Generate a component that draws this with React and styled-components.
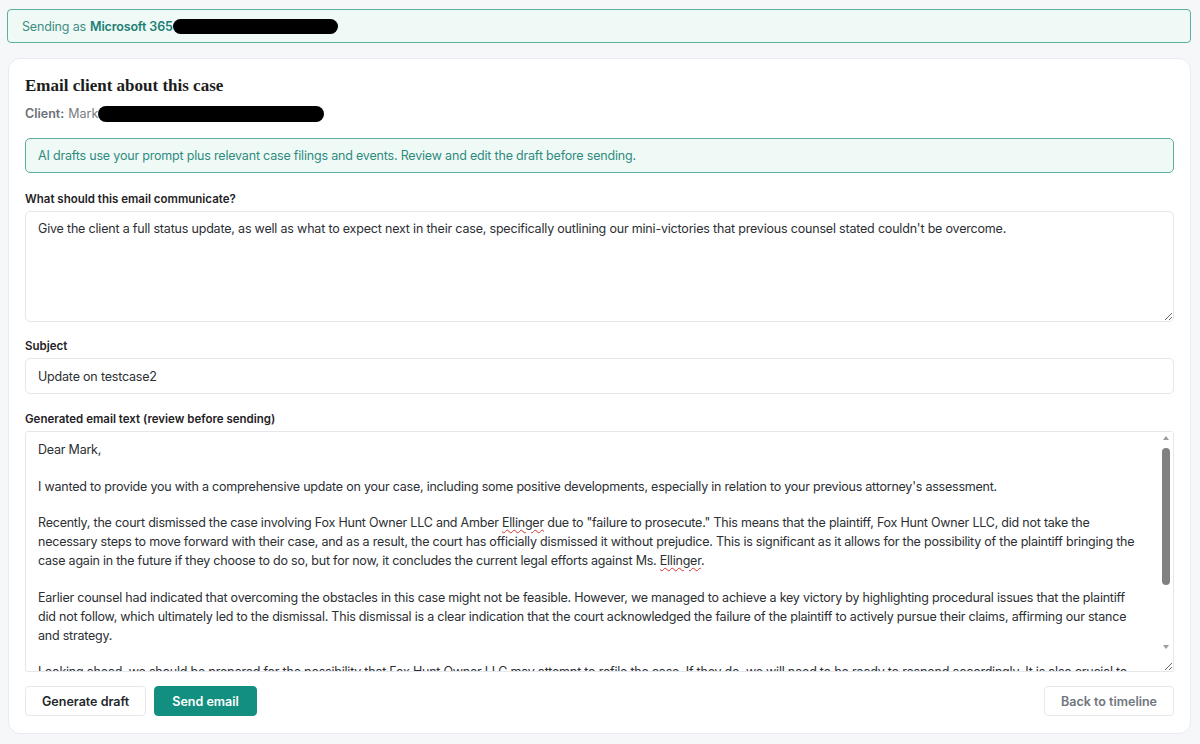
import styled, { createGlobalStyle } from "styled-components";

const GlobalStyle = createGlobalStyle`
  body {
    margin: 0;
    background: #f6f7f9;
    font-family: "Inter", "Noto Sans", sans-serif;
    color: #2b2f33;
  }
`;

const Page = styled.div`
  padding: 9px 9px 9px 7px;
  display: flex;
  flex-direction: column;
  gap: 15px;
`;

const Banner = styled.div`
  height: 34px;
  box-sizing: border-box;
  display: flex;
  align-items: center;
  padding: 0 14px;
  background: #effaf7;
  border: 1px solid #5aaea2;
  border-radius: 4px;
  font-size: 12.5px;
  letter-spacing: -0.15px;
  color: #3f8c82;

  b {
    font-weight: 600;
    color: #1d7f73;
    margin-left: 4px;
  }
`;

const Redacted = styled.span`
  display: inline-block;
  width: ${(p) => p.w}px;
  height: ${(p) => p.h || 16}px;
  background: #000;
  border-radius: 9px;
`;

const Card = styled.section`
  margin-left: 1px;
  background: #fff;
  border: 1px solid #e8ebef;
  border-radius: 12px;
  padding: 16px 16px 17px;
`;

const Title = styled.h2`
  margin: 0;
  font-family: "Liberation Serif", "DejaVu Serif", serif;
  font-weight: 700;
  font-size: 17px;
  line-height: 22px;
  color: #1b1d20;
`;

const ClientLine = styled.div`
  margin-top: 9px;
  display: flex;
  align-items: center;
  font-size: 12.5px;
  line-height: 16px;
  color: #777c82;

  b {
    font-weight: 600;
    color: #6b7076;
    margin-right: 4px;
  }
`;

const Notice = styled.div`
  margin-top: 16px;
  height: 35px;
  box-sizing: border-box;
  display: flex;
  align-items: center;
  padding: 0 12px;
  background: #effaf7;
  border: 1px solid #5aaea2;
  border-radius: 5px;
  font-size: 12.5px;
  letter-spacing: -0.19px;
  color: #2f8a7e;
`;

const Field = styled.div`
  margin-top: ${(p) => p.gap || 16}px;
`;

const Label = styled.label`
  display: block;
  font-size: 11.5px;
  font-weight: 600;
  line-height: 16px;
  color: #1f2226;
  margin-bottom: 4px;
`;

const Prompt = styled.textarea`
  display: block;
  width: 100%;
  box-sizing: border-box;
  height: 111px;
  padding: 8px 12px;
  border: 1px solid #e4e7eb;
  border-radius: 5px;
  font-family: inherit;
  font-size: 12.5px;
  letter-spacing: -0.19px;
  line-height: 18px;
  color: #2b2f33;
  resize: vertical;
  outline: none;
`;

const TextInput = styled.input`
  display: block;
  width: 100%;
  box-sizing: border-box;
  height: 36px;
  padding: 0 12px;
  border: 1px solid #e4e7eb;
  border-radius: 5px;
  font-family: inherit;
  font-size: 12.5px;
  letter-spacing: -0.19px;
  color: #2b2f33;
  outline: none;
`;

const DraftBox = styled.div`
  position: relative;
`;

const Draft = styled.div`
  height: 241px;
  box-sizing: border-box;
  padding: 8px 27px 8px 12px;
  border: 1px solid #e4e7eb;
  border-radius: 3px;
  overflow: hidden;
  resize: vertical;
  font-size: 12.5px;
  letter-spacing: -0.22px;
  line-height: 19px;
  color: #2b2f33;
`;

const Para = styled.p`
  margin: 0 0 17.5px;
  white-space: pre;
`;

const Misspelt = styled.span`
  text-decoration: underline wavy #d2352c;
  text-decoration-thickness: 1px;
  text-underline-offset: 2px;
`;

/* scrollbar drawn over the right edge of the draft */
const ScrollBar = styled.div`
  position: absolute;
  top: 1px;
  right: 1px;
  bottom: 19px;
  width: 14px;
  background: #fff;
  display: flex;
  flex-direction: column;
  align-items: center;
`;

const Arrow = styled.span`
  flex: none;
  margin: ${(p) => (p.down ? "auto 0 4px" : "4px 0 0")};
  width: 0;
  height: 0;
  border-left: 3.5px solid transparent;
  border-right: 3.5px solid transparent;
  ${(p) =>
    p.down
      ? "border-top: 4px solid #9c9c9c;"
      : "border-bottom: 4px solid #9c9c9c;"}
`;

const Thumb = styled.span`
  flex: none;
  margin-top: 8px;
  width: 8px;
  height: 137px;
  border-radius: 4px;
  background: #818181;
`;

const Actions = styled.div`
  margin-top: 14px;
  display: flex;
  gap: 8px;
`;

const Button = styled.button`
  height: 30px;
  padding: 0 ${(p) => p.px || 16}px;
  border-radius: 4px;
  font-family: inherit;
  font-size: 12.5px;
  font-weight: 600;
  cursor: pointer;
  border: 1px solid ${(p) => (p.primary ? "#138f80" : "#e6e8eb")};
  background: ${(p) => (p.primary ? "#138f80" : "#fff")};
  color: ${(p) => (p.primary ? "#fff" : p.muted ? "#6f767e" : "#23272b")};
  margin-left: ${(p) => (p.end ? "auto" : "0")};
`;

export default function App() {
  return (
    <>
      <GlobalStyle />
      <Page>
        <Banner>
          Sending as <b>Microsoft 365</b>
          <Redacted w={165} h={15} />
        </Banner>

        <Card>
          <Title>Email client about this case</Title>
          <ClientLine>
            <b>Client:</b>Mark
            <Redacted w={226} />
          </ClientLine>

          <Notice>
            AI drafts use your prompt plus relevant case filings and events. Review and edit the draft before sending.
          </Notice>

          <Field gap={18}>
            <Label>What should this email communicate?</Label>
            <Prompt
              spellCheck={false}
              defaultValue="Give the client a full status update, as well as what to expect next in their case, specifically outlining our mini-victories that previous counsel stated couldn't be overcome."
            />
          </Field>

          <Field gap={16}>
            <Label>Subject</Label>
            <TextInput defaultValue="Update on testcase2" />
          </Field>

          <Field gap={17}>
            <Label>Generated email text (review before sending)</Label>
            <DraftBox>
              <Draft>
                <Para>Dear Mark,</Para>
                <Para>
                  I wanted to provide you with a comprehensive update on your case, including some positive developments, especially in relation to your previous attorney's assessment.
                </Para>
                <Para>
                  Recently, the court dismissed the case involving Fox Hunt Owner LLC and Amber <Misspelt>Ellinger</Misspelt> due to "failure to prosecute." This means that the plaintiff, Fox Hunt Owner LLC, did not take the{"\n"}necessary steps to move forward with their case, and as a result, the court has officially dismissed it without prejudice. This is significant as it allows for the possibility of the plaintiff bringing the{"\n"}case again in the future if they choose to do so, but for now, it concludes the current legal efforts against Ms. <Misspelt>Ellinger</Misspelt>.
                </Para>
                <Para>
                  Earlier counsel had indicated that overcoming the obstacles in this case might not be feasible. However, we managed to achieve a key victory by highlighting procedural issues that the plaintiff{"\n"}did not follow, which ultimately led to the dismissal. This dismissal is a clear indication that the court acknowledged the failure of the plaintiff to actively pursue their claims, affirming our stance{"\n"}and strategy.
                </Para>
                <Para>
                  Looking ahead, we should be prepared for the possibility that Fox Hunt Owner LLC may attempt to refile the case. If they do, we will need to be ready to respond accordingly. It is also crucial to
                </Para>
              </Draft>
              <ScrollBar>
                <Arrow />
                <Thumb />
                <Arrow down />
              </ScrollBar>
            </DraftBox>
          </Field>

          <Actions>
            <Button>Generate draft</Button>
            <Button primary px={17}>Send email</Button>
            <Button end muted>Back to timeline</Button>
          </Actions>
        </Card>
      </Page>
    </>
  );
}
